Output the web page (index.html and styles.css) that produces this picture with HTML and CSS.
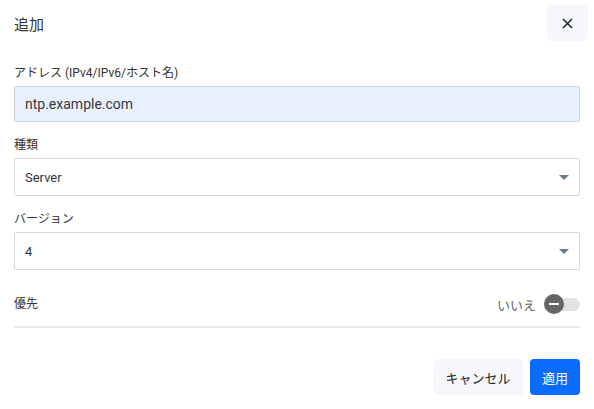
FILE: index.html
```html
<!DOCTYPE html>
<html lang="ja">
<head>
<meta charset="utf-8">
<link rel="stylesheet" href="styles.css">
</head>
<body>
<div class="dialog">
  <div class="header">
    <h1 class="title">追加</h1>
    <button class="close" type="button" aria-label="閉じる">
      <svg width="11" height="11" viewBox="0 0 11 11"><path d="M1 1 L10 10 M10 1 L1 10" stroke="#1c2430" stroke-width="1.5" fill="none"/></svg>
    </button>
  </div>
  <div class="field field-first">
    <label class="label">アドレス (IPv4/IPv6/ホスト名)</label>
    <div class="input filled">ntp.example.com</div>
  </div>
  <div class="field">
    <label class="label">種類</label>
    <div class="input select"><span>Server</span><span class="caret"></span></div>
  </div>
  <div class="field">
    <label class="label">バージョン</label>
    <div class="input select"><span>4</span><span class="caret"></span></div>
  </div>
  <div class="row">
    <span class="label row-label">優先</span>
    <div class="switch-wrap">
      <span class="switch-text">いいえ</span>
      <span class="switch"><span class="knob"></span></span>
    </div>
  </div>
  <div class="footer">
    <button class="btn btn-light" type="button">キャンセル</button>
    <button class="btn btn-primary" type="button">適用</button>
  </div>
</div>
</body>
</html>
```
FILE: styles.css
```css
* { box-sizing: border-box; }
html, body { margin: 0; background: #fff; }
body {
  font-family: Roboto, "Noto Sans CJK JP", sans-serif;
  color: #212529;
}
.dialog { padding: 5px 14px 0 14px; }
.header {
  display: flex;
  justify-content: space-between;
  align-items: center;
  margin-right: -8px;
  height: 36px;
}
.title {
  margin: 0;
  font-size: 15px;
  font-weight: 400;
  color: #333;
}
.close {
  width: 41px;
  height: 36px;
  border: none;
  border-radius: 5px;
  background: #f5f7fa;
  display: flex;
  align-items: center;
  justify-content: center;
  padding: 0;
}
.field { display: flex; flex-direction: column; }
.field-first { margin-top: 24px; }
.label {
  font-size: 12px;
  line-height: 16px;
  color: #333;
}
.field .label { margin-bottom: 5px; }
.input {
  height: 36px;
  border: 1px solid #d6dbe1;
  border-radius: 2px;
  padding: 0 10px;
  display: flex;
  align-items: center;
  font-size: 14px;
  color: #3a3a3a;
}
.filled {
  background: #e8f0fe;
  border-color: #cbd3dd;
}
.select {
  height: 38px;
  justify-content: space-between;
  font-size: 13px;
  color: #333;
}
.field + .field { margin-top: 15px; }
.caret {
  width: 0;
  height: 0;
  border-left: 5px solid transparent;
  border-right: 5px solid transparent;
  border-top: 5px solid #6b7a8c;
}
.row {
  display: flex;
  justify-content: space-between;
  align-items: center;
  margin-top: 23px;
  height: 22px;
}
.row-label { font-size: 12px; }
.switch-wrap { display: flex; align-items: center; gap: 8px; }
.switch-text { font-size: 13px; color: #666; }
.switch {
  position: relative;
  width: 36px;
  height: 13px;
  border-radius: 7px;
  background: #e2e2e2;
}
.knob {
  position: absolute;
  left: 0;
  top: -4px;
  width: 20px;
  height: 20px;
  border-radius: 50%;
  background: #666;
}
.knob::after {
  content: "";
  position: absolute;
  left: 5px;
  top: 9px;
  width: 10px;
  height: 2px;
  background: #fff;
}
.footer {
  border-top: 2px solid #e8ebef;
  margin-top: 11px;
  padding-top: 31px;
  display: flex;
  justify-content: flex-end;
  gap: 7px;
}
.btn {
  height: 36px;
  border: none;
  border-radius: 4px;
  font-family: inherit;
  font-size: 13px;
  padding: 0 12px;
}
.btn-light { background: #f5f7fa; color: #212529; width: 90px; }
.btn-primary { background: #0a6cff; color: #fff; width: 50px; padding: 0; }
```
